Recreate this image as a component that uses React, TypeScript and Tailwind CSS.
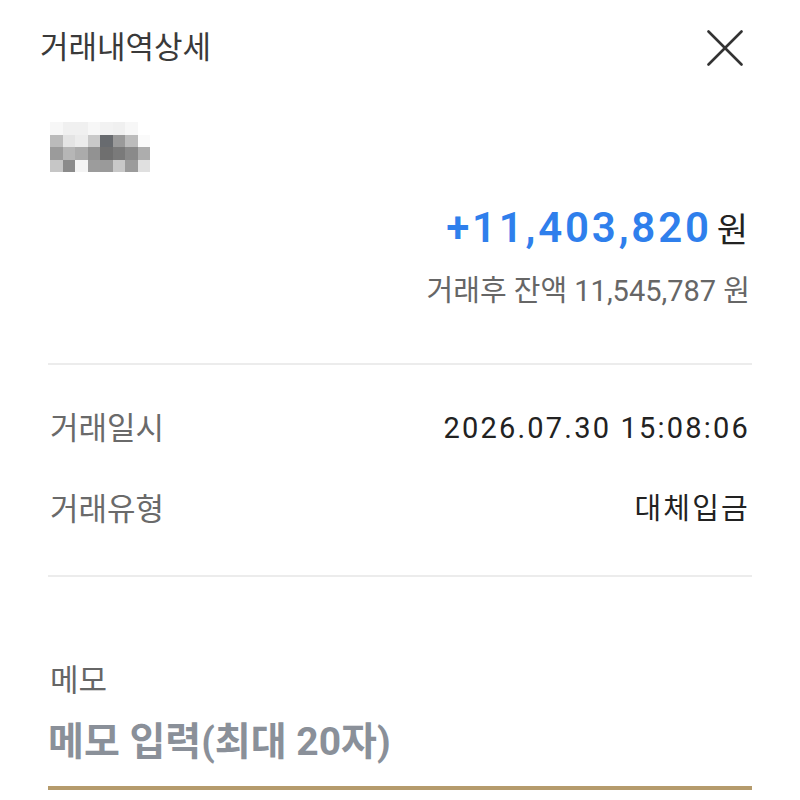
import React from "react";

const PIXELS = [
  ["#f7f7f7", "#f0f0f0", "#f0f0f0", "#f7f7f7", "#f2f2f2", "#f0f0f0", "#f7f7f7", "#ffffff"],
  ["#bbbbbb", "#e4e4e4", "#ececec", "#c9c9c9", "#686b6f", "#9a9a9a", "#bcbcbc", "#fafafa"],
  ["#9b9b9b", "#b6b6b6", "#ababab", "#929292", "#6f6f6f", "#7a7a7a", "#8a8a8a", "#adadad"],
  ["#c6c6c6", "#8b8b8b", "#f4f4f4", "#9c9c9c", "#9a9a9a", "#c8c8c8", "#9b9b9b", "#e0e0e0"],
];

function CloseIcon() {
  return (
    <svg width="36" height="36" viewBox="0 0 36 36" fill="none" stroke="#333333" strokeWidth="2.6" strokeLinecap="round">
      <line x1="1.5" y1="1.5" x2="34.5" y2="34.5" />
      <line x1="34.5" y1="1.5" x2="1.5" y2="34.5" />
    </svg>
  );
}

function InfoRow({ label, value }: { label: string; value: string }) {
  return (
    <div className="flex h-[60px] items-center justify-between px-[50px]">
      <span className="text-[31px] text-[#6a6a6a]">{label}</span>
      <span className="text-[29px] tracking-[2.2px] text-[#222222]">{value}</span>
    </div>
  );
}

export default function App() {
  return (
    <div className="h-[800px] w-[800px] overflow-hidden bg-white font-['Roboto','Noto_Sans_CJK_KR',sans-serif]">
      {/* Header */}
      <header className="flex h-[96px] items-center justify-between pl-[40px] pr-[57px]">
        <h1 className="text-[31px] font-normal text-[#3a3a3a]">거래내역상세</h1>
        <CloseIcon />
      </header>

      {/* Pixelated name */}
      <div className="ml-[50px] mt-[26px] grid w-fit grid-cols-[repeat(8,12.5px)] auto-rows-[12.5px]">
        {PIXELS.flat().map((c, i) => (
          <div key={i} style={{ backgroundColor: c }} />
        ))}
      </div>

      {/* Amount */}
      <div className="mt-[26px] flex h-[60px] items-baseline justify-end pr-[52px]">
        <span className="text-[42px] font-semibold leading-[60px] tracking-[2.8px] text-[#2f7fec]">+11,403,820</span>
        <span className="ml-[5px] text-[34px] text-[#222222]">원</span>
      </div>
      <div className="mt-[12px] flex h-[44px] items-center justify-end pr-[50px] text-[29px] text-[#666666]">
        <span>거래후 잔액 11,545,787 원</span>
      </div>

      <div className="mx-[48px] mt-[49px] h-[2px] bg-[#ececec]" />

      <div className="mt-[34px]">
        <InfoRow label="거래일시" value="2026.07.30 15:08:06" />
      </div>
      <div className="mt-[21px]">
        <InfoRow label="거래유형" value="대체입금" />
      </div>

      <div className="mx-[48px] mt-[35px] h-[2px] bg-[#ececec]" />

      {/* Memo */}
      <div className="mt-[82px] flex h-[44px] items-center px-[50px] text-[31px] text-[#666666]">메모</div>
      <div className="mx-[48px] mt-[11px] flex h-[56px] items-center text-[39px] font-bold text-[#8a9099]">
        메모 입력(최대 20자)
      </div>
      <div className="mx-[48px] mt-[16px] h-[4px] bg-[#b59b6c]" />
    </div>
  );
}
